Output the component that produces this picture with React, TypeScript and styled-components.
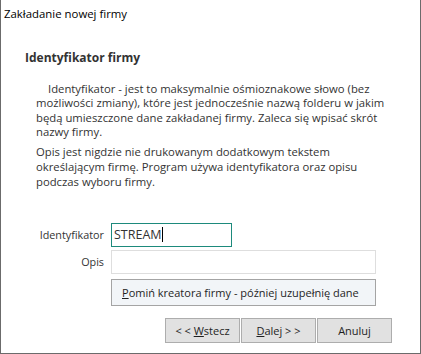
import React from "react";
import styled, { createGlobalStyle } from "styled-components";

const Global = createGlobalStyle`
  html, body { margin: 0; padding: 0; background: #fff; }
  body { font-family: "Open Sans", "Noto Sans", sans-serif; }
`;

const Window = styled.div`
  box-sizing: border-box;
  width: 421px;
  height: 354px;
  border-left: 1px solid #6b6b6b;
  border-right: 1px solid #6b6b6b;
  border-bottom: 1px solid #6b6b6b;
  background: #fff;
  display: flex;
  flex-direction: column;
  color: #1f1f1f;
`;

const TitleBar = styled.div`
  height: 26px;
  padding: 6px 0 0 3px;
  box-sizing: border-box;
  font-size: 11.4px;
  color: #000;
  line-height: 16px;
`;

const Body = styled.div`
  padding: 23px 0 0 24px;
  display: flex;
  flex-direction: column;
`;

const Heading = styled.h1`
  margin: 0;
  font-size: 12px;
  font-weight: 700;
  color: #333;
  line-height: 18px;
`;

const Text = styled.div`
  margin-top: 14.7px;
  display: flex;
  flex-direction: column;
  gap: 5.4px;
`;

const Paragraph = styled.p<{ $indent?: boolean }>`
  margin: 0 0 0 11px;
  font-size: 11.3px;
  line-height: 14.6px;
  color: #333;
  white-space: nowrap;
  text-indent: ${(p) => (p.$indent ? "12px" : "0")};
`;

const Form = styled.div`
  margin-top: 33.6px;
  display: grid;
  grid-template-columns: 79px auto;
  column-gap: 7px;
  row-gap: 3px;
  align-items: center;
`;

const Label = styled.label`
  text-align: right;
  color: #333;
  font-size: 10.8px;
`;

const Input = styled.div<{ $w: number; $focused?: boolean }>`
  box-sizing: border-box;
  width: ${(p) => p.$w}px;
  height: 24px;
  border: 1px solid ${(p) => (p.$focused ? "#1d8a7c" : "#dedede")};
  background: #fff;
  display: flex;
  align-items: center;
  padding-left: 2px;
  font-size: 12.5px;
  color: #333;
`;

const Caret = styled.span`
  display: inline-block;
  width: 1px;
  height: 15px;
  background: #000;
`;

const WideButton = styled.button`
  grid-column: 2;
  box-sizing: border-box;
  width: 265px;
  height: 27px;
  margin-top: 2px;
  border: 1px solid #a4a4a4;
  background: #f2f5f8;
  text-align: left;
  padding: 0 0 0 10px;
  font-family: inherit;
  font-size: 11px;
  color: #1f1f1f;
`;

const Footer = styled.div`
  display: flex;
  justify-content: flex-end;
  gap: 1px;
  padding: 12px 28px 0 0;
`;

const NavButton = styled.button`
  box-sizing: border-box;
  width: 75px;
  height: 25px;
  border: 1px solid #adadad;
  background: #e1e1e1;
  font-family: inherit;
  font-size: 11px;
  color: #1f1f1f;
  padding: 0;
`;

const Key = styled.span`
  text-decoration: underline;
`;

export default function App() {
  return (
    <>
      <Global />
      <Window>
        <TitleBar>Zakładanie nowej firmy</TitleBar>
        <Body>
          <Heading>Identyfikator firmy</Heading>
          <Text>
            <Paragraph $indent>
              Identyfikator - jest to maksymalnie ośmioznakowe słowo (bez
              <br />
              możliwości zmiany), które jest jednocześnie nazwą folderu w jakim
              <br />
              będą umieszczone dane zakładanej firmy. Zaleca się wpisać skrót
              <br />
              nazwy firmy.
            </Paragraph>
            <Paragraph>
              Opis jest nigdzie nie drukowanym dodatkowym tekstem
              <br />
              określającym firmę. Program używa identyfikatora oraz opisu
              <br />
              podczas wyboru firmy.
            </Paragraph>
          </Text>
          <Form>
            <Label>Identyfikator</Label>
            <Input $w={121} $focused>
              STREAM
              <Caret />
            </Input>
            <Label>Opis</Label>
            <Input $w={265} />
            <WideButton>
              <Key>P</Key>omiń kreatora firmy - później uzupełnię dane
            </WideButton>
          </Form>
        </Body>
        <Footer>
          <NavButton>
            &lt; &lt; <Key>W</Key>stecz
          </NavButton>
          <NavButton>
            <Key>D</Key>alej &gt; &gt;
          </NavButton>
          <NavButton>Anuluj</NavButton>
        </Footer>
      </Window>
    </>
  );
}
